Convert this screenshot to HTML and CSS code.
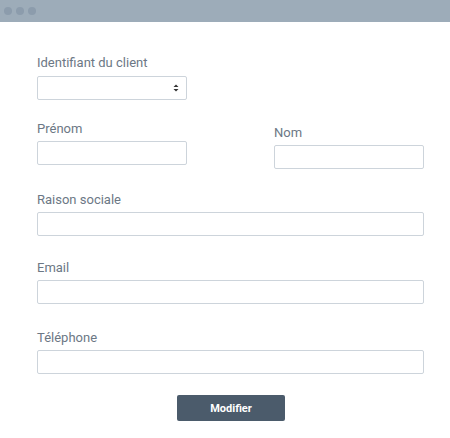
FILE: index.html
```html
<!DOCTYPE html>
<html lang="fr">
<head>
<meta charset="utf-8">
<title>Modifier le client</title>
<link rel="stylesheet" href="styles.css">
</head>
<body>
<div class="titlebar">
  <span class="dot"></span><span class="dot"></span><span class="dot"></span>
</div>
<form class="form">
  <div class="field field-first">
    <label class="label label-first">Identifiant du client</label>
    <div class="select-wrap">
      <select class="select"></select>
      <svg class="select-arrow" width="6" height="8" viewBox="0 0 6 8"><path d="M3 0.5 L5.5 3 L0.5 3 Z M3 7.5 L5.5 5 L0.5 5 Z" fill="#333"/></svg>
    </div>
  </div>
  <div class="row">
    <div class="field field-half">
      <label class="label">Prénom</label>
      <input class="input" type="text">
    </div>
    <div class="field field-half field-nom">
      <label class="label">Nom</label>
      <input class="input" type="text">
    </div>
  </div>
  <div class="field field-raison">
    <label class="label">Raison sociale</label>
    <input class="input" type="text">
  </div>
  <div class="field field-email">
    <label class="label">Email</label>
    <input class="input" type="text">
  </div>
  <div class="field field-tel">
    <label class="label">Téléphone</label>
    <input class="input" type="text">
  </div>
  <div class="actions">
    <button class="button" type="button">Modifier</button>
  </div>
</form>
</body>
</html>
```
FILE: styles.css
```css
* { box-sizing: border-box; }
html, body { margin: 0; padding: 0; background: #ffffff; }
body { font-family: Roboto, "Liberation Sans", sans-serif; }

.titlebar {
  height: 22px;
  background: #9dacb9;
  display: flex;
  align-items: center;
  gap: 4px;
  padding-left: 4px;
}
.dot {
  width: 8px;
  height: 8px;
  border-radius: 50%;
  background: #8c9cac;
}

.form {
  padding: 33px 26px 0 37px;
}
.field { display: block; }
.label {
  display: block;
  font-size: 13px;
  line-height: 16px;
  color: #6c7885;
  margin-bottom: 4px;
}
.label-first { margin-bottom: 5px; }

.select-wrap {
  position: relative;
  width: 150px;
  height: 24px;
}
.select {
  -webkit-appearance: none;
  appearance: none;
  width: 150px;
  height: 24px;
  border: 1px solid #cdd4db;
  border-radius: 2px;
  background: #ffffff;
  margin: 0;
  display: block;
}
.select-arrow {
  position: absolute;
  right: 8px;
  top: 8px;
}

.input {
  display: block;
  width: 100%;
  height: 24px;
  border: 1px solid #cdd4db;
  border-radius: 2px;
  background: #ffffff;
  margin: 0;
  padding: 0 6px;
}

.row {
  display: flex;
  justify-content: space-between;
  margin-top: 21px;
}
.field-half { width: 150px; }
.field-nom { padding-top: 4px; }

.field-raison { margin-top: 23px; }
.field-email { margin-top: 24px; }
.field-tel { margin-top: 26px; }

.actions {
  display: flex;
  justify-content: center;
  padding-left: 1px;
  margin-top: 21px;
}
.button {
  width: 108px;
  height: 26px;
  border: none;
  border-radius: 2px;
  background: #4b5b6b;
  color: #ffffff;
  font-family: Roboto, "Liberation Sans", sans-serif;
  font-weight: 700;
  font-size: 11px;
}
```
